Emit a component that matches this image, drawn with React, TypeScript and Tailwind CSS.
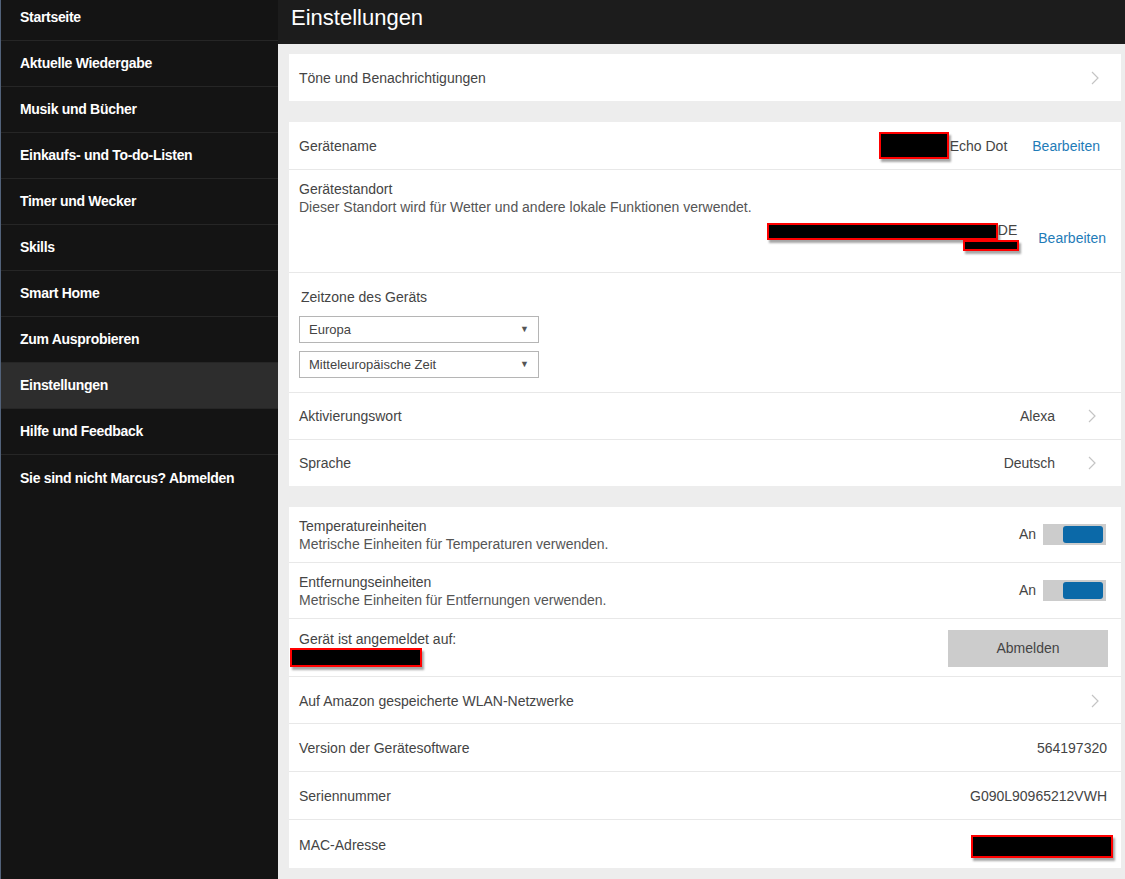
const navItems = [
  "Startseite",
  "Aktuelle Wiedergabe",
  "Musik und Bücher",
  "Einkaufs- und To-do-Listen",
  "Timer und Wecker",
  "Skills",
  "Smart Home",
  "Zum Ausprobieren",
  "Einstellungen",
  "Hilfe und Feedback",
  "Sie sind nicht Marcus? Abmelden",
];

function Redact({ className }: { className: string }) {
  return <div className={"bg-black border-2 border-[#ff0000] shadow-[2px_3px_2px_rgba(0,0,0,0.35)] " + className} />;
}

function Chevron({ className = "ml-[32px] mr-[24px]" }: { className?: string }) {
  return (
    <svg width="10" height="16" viewBox="0 0 10 16" className={className}>
      <path d="M2 2 L8 8 L2 14" fill="none" stroke="#c4c4c4" strokeWidth="1.2" />
    </svg>
  );
}

function Toggle() {
  return (
    <div className="ml-[7px] w-[63px] h-[21px] bg-[#cccccc] flex items-center justify-end pr-[3px]">
      <div className="w-10 h-[17px] rounded-[3px] bg-[#0b69a8]" />
    </div>
  );
}

function Select({ label }: { label: string }) {
  return (
    <div className="w-[240px] h-[27px] border border-[#b5b5b5] flex items-center justify-between px-[9px] text-[13px] text-[#444]">
      <span>{label}</span>
      <span className="text-[9px] text-[#555]">▼</span>
    </div>
  );
}

export default function App() {
  return (
    <div className="flex w-[1125px] h-[879px] overflow-hidden font-['Liberation_Sans',Arial,sans-serif] text-[14px] text-[#444]">
      <aside className="w-[278px] shrink-0 bg-[#141414] border-l border-[#52627a]">
        {navItems.map((item, i) => (
          <div
            key={item}
            className={
              "flex items-center pl-[19px] text-white font-semibold text-[14px] tracking-[-0.3px] " +
              (i === navItems.length - 1 ? "" : "border-b border-[#262626] ") +
              (i === 0 ? "h-[41px] pb-[6px] " : "h-[46px] ") +
              (item === "Einstellungen" ? "bg-[#2d2d2d]" : "")
            }
          >
            {item}
          </div>
        ))}
      </aside>

      <main className="flex-1 bg-[#ededed] flex flex-col">
        <header className="h-[44px] bg-[#1c1c1c] text-white text-[22px] pl-[13px] pt-[1px] shrink-0">Einstellungen</header>

        <div className="pl-[11px] pr-[4px] pt-[10px] flex flex-col gap-[21px]">
          <div className="bg-white h-[47px] flex items-center justify-between pl-[10px] pt-[1px]">
            <span>Töne und Benachrichtigungen</span>
            <Chevron className="mr-[21px]" />
          </div>

          <div className="bg-white flex flex-col">
            <div className="h-[48px] flex items-center justify-between pl-[10px] pr-[21px] pt-[1px] border-b border-[#e8e8e8]">
              <span>Gerätename</span>
              <div className="flex items-center">
                <Redact className="w-[70px] h-[27px] mt-[-2px]" />
                <span className="ml-[1px]">Echo Dot</span>
                <span className="ml-[25px] text-[#1f7cb8]">Bearbeiten</span>
              </div>
            </div>
            <div className="h-[103px] pl-[10px] pr-[15px] pt-[10px] border-b border-[#e8e8e8] flex flex-col">
              <span className="leading-[18px]">Gerätestandort</span>
              <span className="leading-[18px] text-[#555]">Dieser Standort wird für Wetter und andere lokale Funktionen verwendet.</span>
              <div className="flex justify-end items-start mt-[7px]">
                <div className="flex flex-col items-end">
                  <div className="flex items-start">
                    <Redact className="w-[231px] h-[17px]" />
                    <span className="leading-[16px] mt-[-1px]">DE</span>
                  </div>
                  <Redact className="w-[56px] h-[11px] mr-[-2px]" />
                </div>
                <span className="ml-[21px] mt-[5px] text-[#1f7cb8]">Bearbeiten</span>
              </div>
            </div>
            <div className="h-[120px] pl-[10px] pt-[14px] border-b border-[#e8e8e8] flex flex-col">
              <span className="pl-[2px]">Zeitzone des Geräts</span>
              <div className="mt-[8px] flex flex-col gap-[8px]">
                <Select label="Europa" />
                <Select label="Mitteleuropäische Zeit" />
              </div>
            </div>
            <div className="h-[47px] flex items-center justify-between pl-[10px] border-b border-[#e8e8e8]">
              <span>Aktivierungswort</span>
              <div className="flex items-center">
                <span>Alexa</span>
                <Chevron />
              </div>
            </div>
            <div className="h-[46px] flex items-center justify-between pl-[10px]">
              <span>Sprache</span>
              <div className="flex items-center">
                <span>Deutsch</span>
                <Chevron />
              </div>
            </div>
          </div>

          <div className="bg-white flex flex-col">
            <div className="h-[56px] flex items-center justify-between pl-[10px] pr-[15px] pt-[1px] border-b border-[#e8e8e8]">
              <div className="flex flex-col leading-[18px]">
                <span>Temperatureinheiten</span>
                <span className="text-[#555]">Metrische Einheiten für Temperaturen verwenden.</span>
              </div>
              <div className="flex items-center mb-[1px]">
                <span>An</span>
                <Toggle />
              </div>
            </div>
            <div className="h-[56px] flex items-center justify-between pl-[10px] pr-[15px] pt-[1px] border-b border-[#e8e8e8]">
              <div className="flex flex-col leading-[18px]">
                <span>Entfernungseinheiten</span>
                <span className="text-[#555]">Metrische Einheiten für Entfernungen verwenden.</span>
              </div>
              <div className="flex items-center mb-[1px]">
                <span>An</span>
                <Toggle />
              </div>
            </div>
            <div className="h-[58px] flex items-center justify-between pl-[10px] pr-[13px] pt-[1px] border-b border-[#e8e8e8]">
              <div className="flex flex-col leading-[17px] pt-[2px]">
                <span>Gerät ist angemeldet auf:</span>
                <Redact className="w-[132px] h-[19px] ml-[-9px]" />
              </div>
              <div className="w-[160px] h-[37px] bg-[#cccccc] flex items-center justify-center">Abmelden</div>
            </div>
            <div className="h-[47px] flex items-center justify-between pl-[10px] pt-[2px] border-b border-[#e8e8e8]">
              <span>Auf Amazon gespeicherte WLAN-Netzwerke</span>
              <Chevron className="mr-[21px]" />
            </div>
            <div className="h-[48px] flex items-center justify-between pl-[10px] pr-[14px] pt-[2px] border-b border-[#e8e8e8]">
              <span>Version der Gerätesoftware</span>
              <span>564197320</span>
            </div>
            <div className="h-[48px] flex items-center justify-between pl-[10px] pr-[14px] pt-[2px] border-b border-[#e8e8e8]">
              <span>Seriennummer</span>
              <span>G090L90965212VWH</span>
            </div>
            <div className="h-[48px] flex items-center justify-between pl-[10px] pr-[8px] pt-[2px]">
              <span>MAC-Adresse</span>
              <Redact className="w-[142px] h-[23px] mt-[2px]" />
            </div>
          </div>
        </div>
      </main>
    </div>
  );
}
